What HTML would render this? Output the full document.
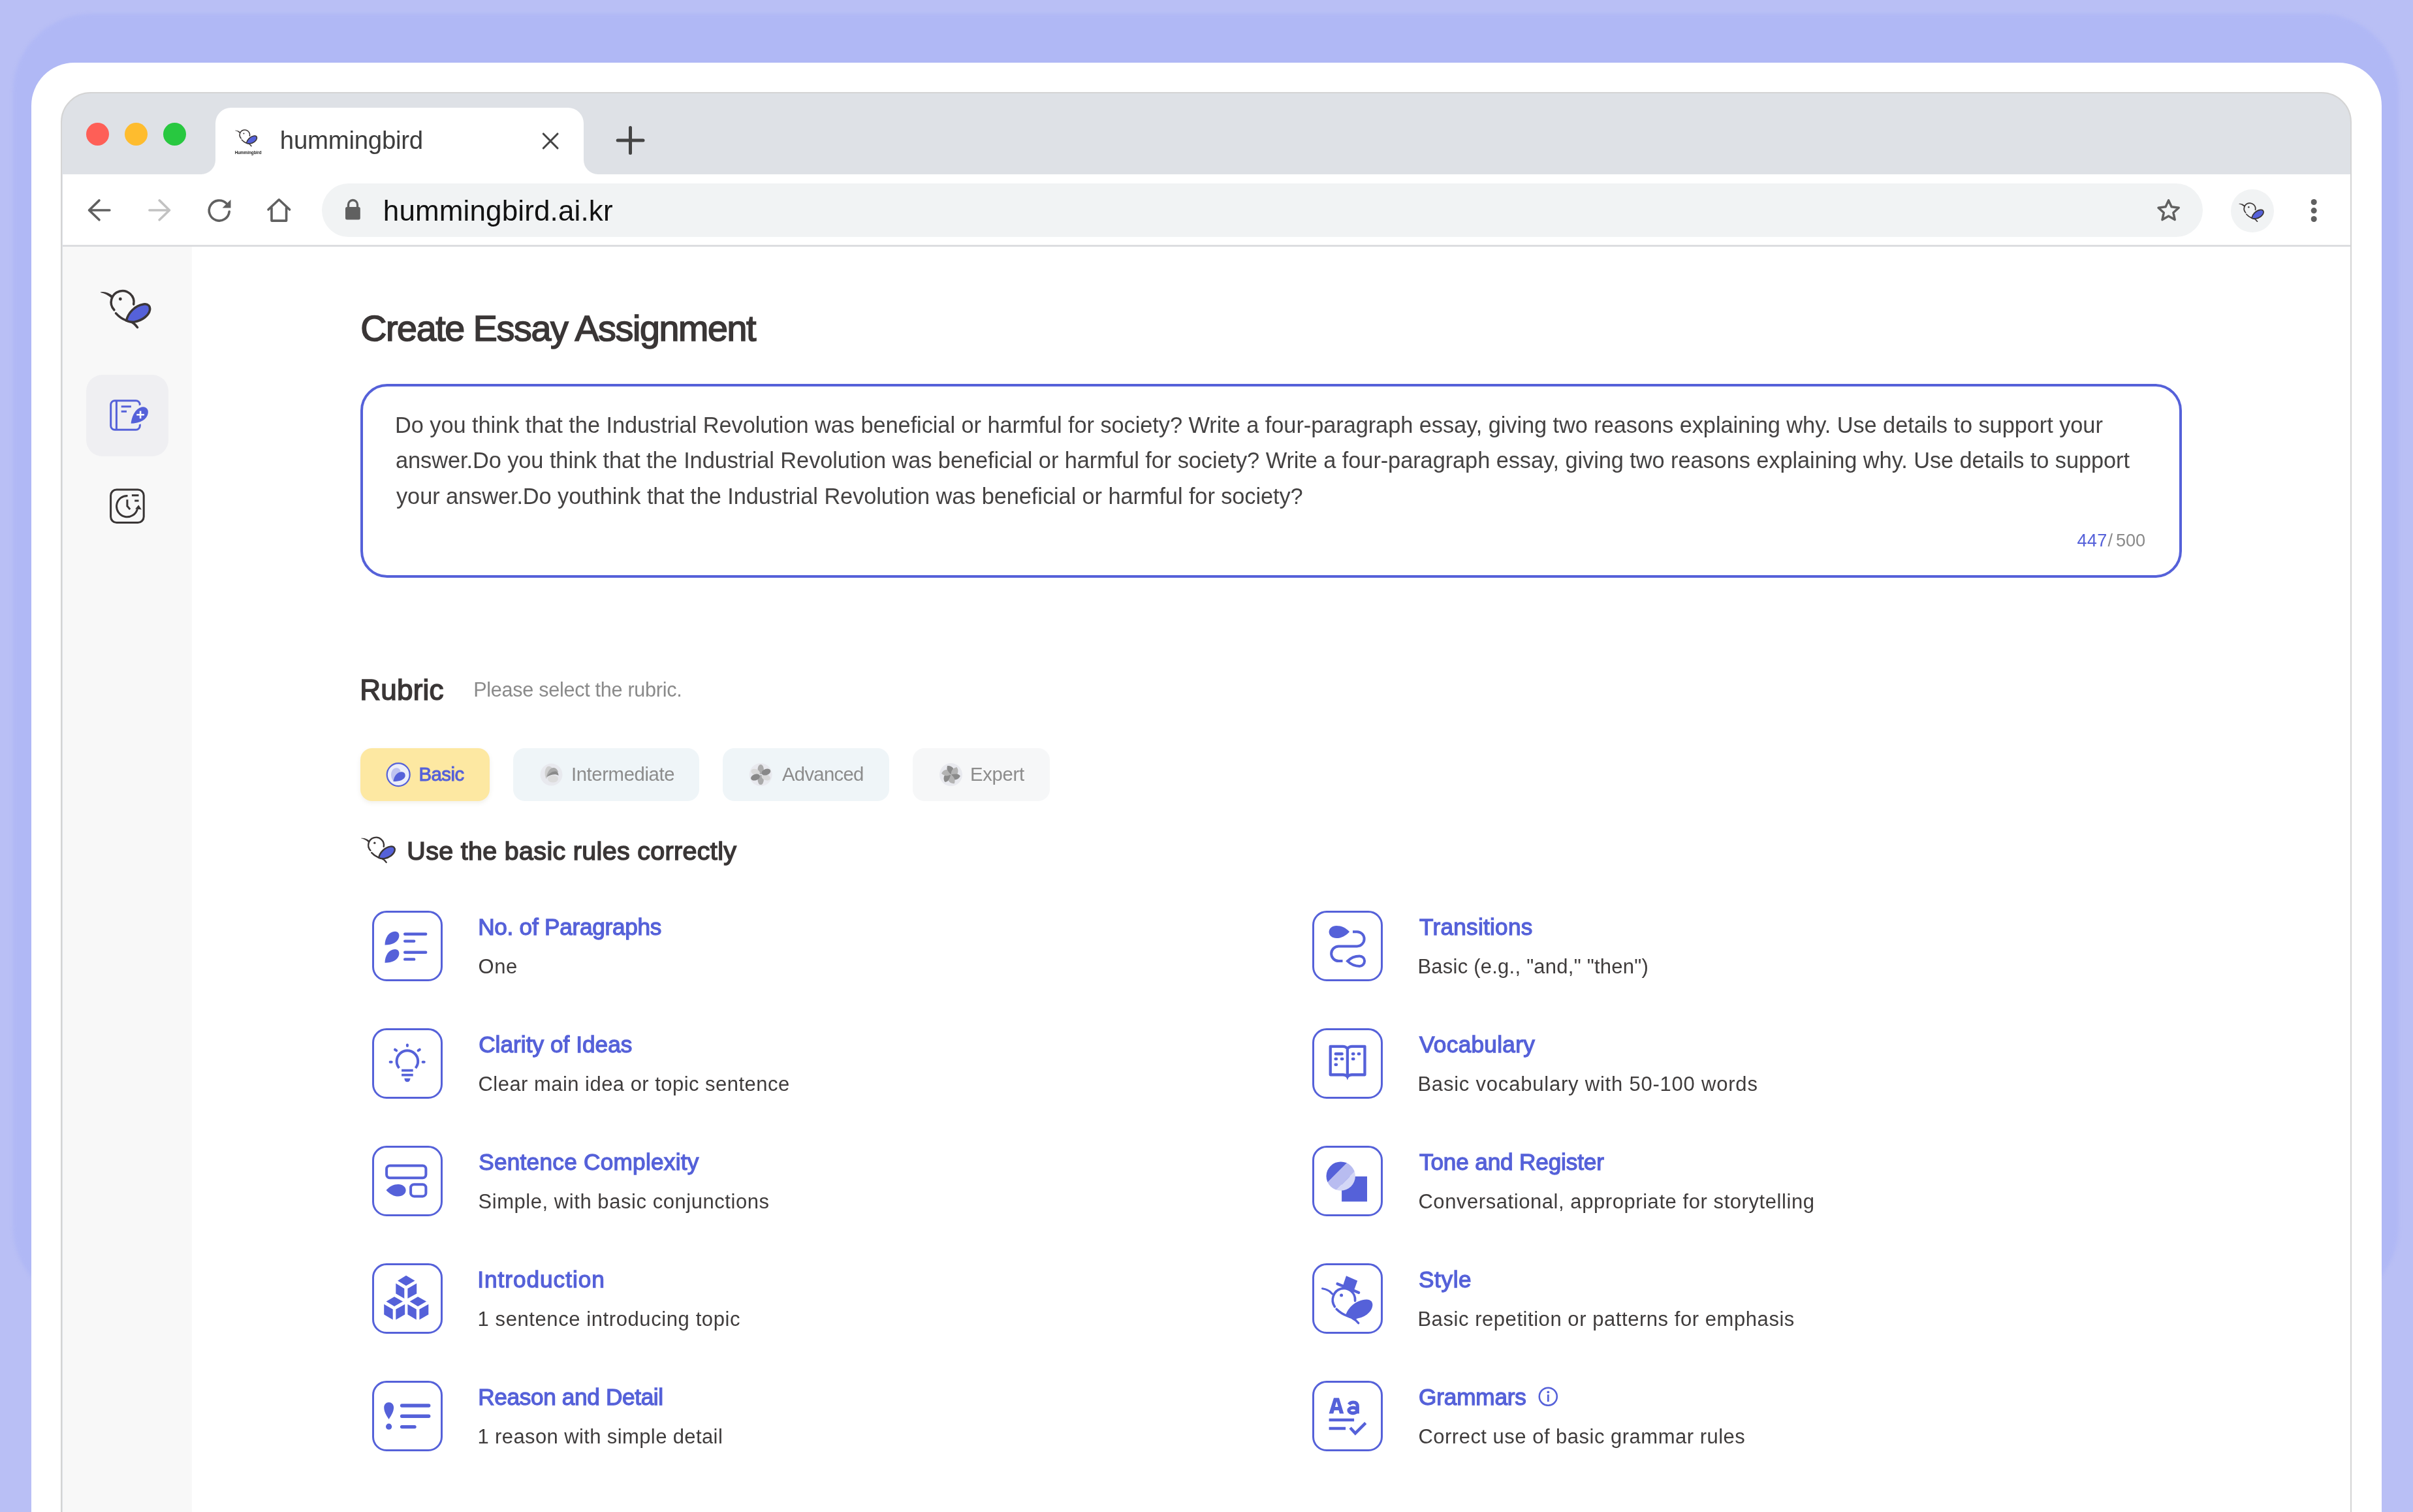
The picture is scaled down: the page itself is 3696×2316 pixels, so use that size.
<!DOCTYPE html>
<html><head><meta charset="utf-8">
<style>
html,body{margin:0;padding:0}
body{width:3696px;height:2316px;overflow:hidden;position:relative;background:#b9bff5;font-family:"Liberation Sans",sans-serif}
.a{position:absolute}
.t{position:absolute;white-space:nowrap;line-height:1}
#txt{position:absolute;left:0;top:0;width:3696px;height:2316px;will-change:transform}
svg{position:absolute;overflow:visible}
</style></head>
<body>
<div class="a" style="left:20px;top:21px;width:3654px;height:1978px;border-radius:120px;background:#b0b8f5;filter:blur(2.5px)"></div>
<div class="a" style="left:48px;top:96px;width:3600px;height:2400px;border-radius:66px;background:#fff"></div>
<div class="a" style="left:93px;top:141px;width:3509px;height:2400px;box-sizing:border-box;border:2.5px solid #d4d4d4;border-radius:46px 46px 0 0;background:#dee1e6"></div>
<div class="a" style="left:95.5px;top:267px;width:3504px;height:2400px;background:#fff"></div>
<div class="a" style="left:306px;top:243px;width:24px;height:24px;background:#fff"></div>
<div class="a" style="left:302px;top:239px;width:28px;height:28px;background:#dee1e6;border-bottom-right-radius:22px"></div>
<div class="a" style="left:894px;top:243px;width:24px;height:24px;background:#fff"></div>
<div class="a" style="left:894px;top:239px;width:28px;height:28px;background:#dee1e6;border-bottom-left-radius:22px"></div>
<div class="a" style="left:330px;top:165px;width:564px;height:102px;border-radius:24px 24px 0 0;background:#fff"></div>
<div class="a" style="left:132px;top:188px;width:35px;height:35px;border-radius:50%;background:#fe5f57"></div>
<div class="a" style="left:191px;top:188px;width:35px;height:35px;border-radius:50%;background:#febc2e"></div>
<div class="a" style="left:250px;top:188px;width:35px;height:35px;border-radius:50%;background:#28c840"></div>
<div class="a" style="left:492.8px;top:281.4px;width:2881.6px;height:81.8px;border-radius:41px;background:#f1f3f4"></div>
<div class="a" style="left:3417.4px;top:290.2px;width:65.6px;height:65.6px;border-radius:50%;background:#f1f3f4"></div>
<div class="a" style="left:95.5px;top:375px;width:3504px;height:3px;background:#dcdde0"></div>
<div class="a" style="left:95.5px;top:378px;width:198.5px;height:2000px;background:#f8f8f8"></div>
<div class="a" style="left:132px;top:573.6px;width:126px;height:125.6px;border-radius:25px;background:#efeff2"></div>
<!-- textarea -->
<div class="a" style="left:552px;top:588px;width:2790px;height:296.5px;box-sizing:border-box;border:4px solid #5561d9;border-radius:41px"></div>
<!-- rubric buttons -->
<div class="a" style="left:552.4px;top:1146.2px;width:197.6px;height:80.6px;border-radius:18px;background:#fde8a2;box-shadow:0 3px 6px rgba(120,110,60,0.10)"></div>
<div class="a" style="left:786px;top:1146.2px;width:284.8px;height:80.6px;border-radius:18px;background:#eff5f8"></div>
<div class="a" style="left:1106.9px;top:1146.2px;width:255.1px;height:80.6px;border-radius:18px;background:#eff5f8"></div>
<div class="a" style="left:1398px;top:1146.2px;width:209.7px;height:80.6px;border-radius:18px;background:#f6f7f8"></div>
<div id="txt"><div class="t" style="left:428.80px;top:196.09px;font-size:38.4px;color:#3d3d3d;letter-spacing:-0.256px">hummingbird</div>
<div class="t" style="left:586.80px;top:301.35px;font-size:44px;color:#121212;letter-spacing:0.136px">hummingbird.ai.kr</div>
<div class="t" style="left:552.20px;top:475.93px;font-size:55.6px;color:#3a3636;letter-spacing:-1.375px;-webkit-text-stroke:1.6px #3a3636">Create Essay Assignment</div>
<div class="t" style="left:605.00px;top:633.88px;font-size:34.4px;color:#444242;letter-spacing:-0.072px">Do you think that the Industrial Revolution was beneficial or harmful for society? Write a four-paragraph essay, giving two reasons explaining why. Use details to support your</div>
<div class="t" style="left:606.00px;top:688.18px;font-size:34.4px;color:#444242;letter-spacing:-0.082px">answer.Do you think that the Industrial Revolution was beneficial or harmful for society? Write a four-paragraph essay, giving two reasons explaining why. Use details to support</div>
<div class="t" style="left:607.00px;top:742.88px;font-size:34.4px;color:#444242;letter-spacing:-0.094px">your answer.Do youthink that the Industrial Revolution was beneficial or harmful for society?</div>
<div class="t" style="left:3181.40px;top:813.88px;font-size:27.2px;color:#5561d9;letter-spacing:0.330px">447</div>
<div class="t" style="left:3228.40px;top:813.88px;font-size:27.2px;color:#8a8a8a;letter-spacing:0.000px">/</div>
<div class="t" style="left:3241.00px;top:813.88px;font-size:27.2px;color:#8a8a8a;letter-spacing:-0.120px">500</div>
<div class="t" style="left:551.35px;top:1035.35px;font-size:44px;color:#3a3636;letter-spacing:0.191px;-webkit-text-stroke:1.5px #3a3636">Rubric</div>
<div class="t" style="left:725.20px;top:1040.70px;font-size:30.6px;color:#8a8a8a;letter-spacing:-0.291px">Please select the rubric.</div>
<div class="t" style="left:641.50px;top:1170.90px;font-size:29.3px;color:#5561d9;letter-spacing:-0.498px;-webkit-text-stroke:1.0px #5561d9">Basic</div>
<div class="t" style="left:874.90px;top:1170.90px;font-size:29.3px;color:#8c8c8c;letter-spacing:-0.378px">Intermediate</div>
<div class="t" style="left:1198.00px;top:1170.90px;font-size:29.3px;color:#8c8c8c;letter-spacing:-0.716px">Advanced</div>
<div class="t" style="left:1486.00px;top:1170.90px;font-size:29.3px;color:#8c8c8c;letter-spacing:-0.306px">Expert</div>
<div class="t" style="left:623.35px;top:1283.85px;font-size:39.4px;color:#3a3636;letter-spacing:0.352px;-webkit-text-stroke:1.5px #3a3636">Use the basic rules correctly</div>
<div class="t" style="left:732.15px;top:1401.60px;font-size:35.2px;color:#5561d9;letter-spacing:-0.267px;-webkit-text-stroke:1.3px #5561d9">No. of Paragraphs</div>
<div class="t" style="left:732.50px;top:1464.56px;font-size:31.0px;color:#3f3c3c;letter-spacing:0.573px">One</div>
<div class="t" style="left:733.15px;top:1581.60px;font-size:35.2px;color:#5561d9;letter-spacing:0.041px;-webkit-text-stroke:1.3px #5561d9">Clarity of Ideas</div>
<div class="t" style="left:732.50px;top:1644.56px;font-size:31.0px;color:#3f3c3c;letter-spacing:0.464px">Clear main idea or topic sentence</div>
<div class="t" style="left:733.15px;top:1761.60px;font-size:35.2px;color:#5561d9;letter-spacing:0.267px;-webkit-text-stroke:1.3px #5561d9">Sentence Complexity</div>
<div class="t" style="left:732.50px;top:1824.56px;font-size:31.0px;color:#3f3c3c;letter-spacing:0.549px">Simple, with basic conjunctions</div>
<div class="t" style="left:731.15px;top:1941.60px;font-size:35.2px;color:#5561d9;letter-spacing:0.990px;-webkit-text-stroke:1.3px #5561d9">Introduction</div>
<div class="t" style="left:731.50px;top:2004.56px;font-size:31.0px;color:#3f3c3c;letter-spacing:0.591px">1 sentence introducing topic</div>
<div class="t" style="left:732.15px;top:2121.60px;font-size:35.2px;color:#5561d9;letter-spacing:-0.343px;-webkit-text-stroke:1.3px #5561d9">Reason and Detail</div>
<div class="t" style="left:731.50px;top:2184.56px;font-size:31.0px;color:#3f3c3c;letter-spacing:0.384px">1 reason with simple detail</div>
<div class="t" style="left:2174.05px;top:1401.60px;font-size:35.2px;color:#5561d9;letter-spacing:0.251px;-webkit-text-stroke:1.3px #5561d9">Transitions</div>
<div class="t" style="left:2171.40px;top:1464.56px;font-size:31.0px;color:#3f3c3c;letter-spacing:0.236px">Basic (e.g., &quot;and,&quot; &quot;then&quot;)</div>
<div class="t" style="left:2174.05px;top:1581.60px;font-size:35.2px;color:#5561d9;letter-spacing:0.299px;-webkit-text-stroke:1.3px #5561d9">Vocabulary</div>
<div class="t" style="left:2171.40px;top:1644.56px;font-size:31.0px;color:#3f3c3c;letter-spacing:0.787px">Basic vocabulary with 50-100 words</div>
<div class="t" style="left:2174.05px;top:1761.60px;font-size:35.2px;color:#5561d9;letter-spacing:-0.173px;-webkit-text-stroke:1.3px #5561d9">Tone and Register</div>
<div class="t" style="left:2172.40px;top:1824.56px;font-size:31.0px;color:#3f3c3c;letter-spacing:0.561px">Conversational, appropriate for storytelling</div>
<div class="t" style="left:2173.05px;top:1941.60px;font-size:35.2px;color:#5561d9;letter-spacing:0.586px;-webkit-text-stroke:1.3px #5561d9">Style</div>
<div class="t" style="left:2171.40px;top:2004.56px;font-size:31.0px;color:#3f3c3c;letter-spacing:0.554px">Basic repetition or patterns for emphasis</div>
<div class="t" style="left:2173.05px;top:2121.60px;font-size:35.2px;color:#5561d9;letter-spacing:-0.181px;-webkit-text-stroke:1.3px #5561d9">Grammars</div>
<div class="t" style="left:2172.40px;top:2184.56px;font-size:31.0px;color:#3f3c3c;letter-spacing:0.494px">Correct use of basic grammar rules</div></div>
<svg class="a" style="left:0;top:0" width="3696" height="2316" viewBox="0 0 3696 2316">
<defs>
<symbol id="bird" viewBox="12 16 82 63" overflow="visible">
 <path fill="#3b3636" d="M14,22.2 Q24.5,20.6 33,28.6 L30.3,31.6 Q23,24.6 14,22.9 Z"/>
 <g fill="none" stroke="#3b3636" stroke-width="3.5" stroke-linecap="round" stroke-linejoin="round">
  <path d="M34.9,49.8 A17.4,17.4 0 1 1 64.7,41.2"/>
  <path d="M37.5,54.8 Q44,62 52.5,65.5 Q58,67.5 64,68.5"/>
  <path d="M58,66.5 Q65,69 70.5,76.5"/>
  <path d="M53.5,66 C56,55 66,43 80,41 C87,40 90.5,44 89.5,50 C88,58 78,66 66,68 C60,68.5 56,67.5 53.5,66 Z" fill="#5561d9"/>
 </g>
 <circle cx="44.3" cy="33" r="2.4" fill="#3b3636"/>
</symbol>
<symbol id="box" viewBox="0 0 108 108" overflow="visible">
 <rect x="1.5" y="1.5" width="105" height="105" rx="20.5" fill="none" stroke="#5561d9" stroke-width="3"/>
</symbol>
<clipPath id="tc"><circle cx="43.7" cy="46.6" r="22.2"/></clipPath>
</defs>
<!-- birds -->
<use href="#bird" x="152" y="441" width="82" height="63"/>
<use href="#bird" x="359.1" y="197" width="36.3" height="27.9"/>
<use href="#bird" x="3428.1" y="308.8" width="41.2" height="31.6"/>
<use href="#bird" x="551.8" y="1279.6" width="55.9" height="43"/>
<text x="380.1" y="235.8" font-family="Liberation Sans" font-weight="700" font-size="6.3" text-anchor="middle" fill="#222">Hummingbird</text>
<!-- toolbar icons -->
<g fill="none" stroke-linecap="round" stroke-linejoin="round" stroke-width="3.6">
 <path stroke="#606060" d="M167.9,322 H136.5 M152,306.9 L136.5,322 L152,336.8"/>
 <path stroke="#c2c2c2" d="M228.9,322 H259.5 M244.2,306.9 L259.5,322 L244.2,336.8"/>
 <path stroke="#606060" d="M351.2,324 A15.5,15.5 0 1 1 346.7,311.5"/>
 <path stroke="#606060" d="M411,321 L427.3,305.8 L443.6,321 M416,318 V338.1 H438.6 V318"/>
 <path stroke="#606060" stroke-width="3.3" d="M533.5,318 V313.5 A7,7 0 0 1 547.5,313.5 V318"/>
 <path stroke="#444" stroke-width="3.1" d="M832.3,205 L854,227 M854,205 L832.3,227"/>
 <path stroke="#444" stroke-width="5" d="M946.2,215 H985 M965.5,195.5 V234.5"/>
</g>
<path fill="#606060" d="M353.5,305.8 V318.6 H340.6 Z"/>
<rect x="529" y="317.1" width="22.8" height="19.4" rx="2.5" fill="#606060"/>
<path fill="none" stroke="#606060" stroke-width="3.5" stroke-linejoin="round" d="M3321.6,306.9 L3326.1,316.8 L3337.2,318.3 L3328.9,325.7 L3331.2,336.6 L3321.6,331.1 L3312.0,336.6 L3314.3,325.7 L3306.0,318.3 L3317.1,316.8 Z"/>
<g fill="#606060"><circle cx="3544.2" cy="309.5" r="4.5"/><circle cx="3544.2" cy="322.6" r="4.5"/><circle cx="3544.2" cy="335.5" r="4.5"/></g>

<!-- sidebar edit icon -->
<g fill="none" stroke="#5561d9" stroke-width="3">
 <rect x="169.7" y="613.7" width="44.6" height="44.6" rx="6"/>
 <path d="M178.4,613.7 V658.3"/>
 <path d="M185.7,622.7 H200.9 M185.7,630.3 H194"/>
</g>
<path fill="#5561d9" stroke="#efeff2" stroke-width="3.5" d="M198.6,650.5 C199.5,640 204,625 216.5,621.8 C224,620 229.5,626 228.5,633 C227,643 217,650.5 198.6,650.5 Z"/>
<path fill="none" stroke="#fff" stroke-width="2.6" d="M209.3,635.3 H220.9 M215.1,629.5 V641.1"/>
<!-- sidebar history icon -->
<g fill="none" stroke="#393535" stroke-width="3">
 <rect x="169.6" y="750" width="50.6" height="50.5" rx="9"/>
 <path d="M195.5,759.4 A16.2,16.2 0 1 0 210.4,779.8"/>
 <path d="M194.9,765.3 V775.3 L199.2,780.2"/>
 <path d="M201.9,758.7 H212.5 M206.2,767 H212.5"/>
</g>
<path fill="#393535" d="M212.3,773.4 L216.8,780.6 L207.2,779.6 Z"/>

<!-- rubric button icons -->
<circle cx="610.2" cy="1186.6" r="17.5" fill="#eceefa" stroke="#5561d9" stroke-width="2.2"/>
<path fill="#bfc3f0" d="M602.3,1196.5 C597.5,1190 598,1181 603.5,1177.3 C607.5,1175 612.5,1176.8 613.5,1181 L607,1191 Z"/>
<path fill="#5561d9" d="M602.5,1197 C603,1190 608,1182.5 614.5,1182.3 C619,1182.2 621.5,1185.5 620.5,1189.5 C619,1194.5 612,1197 602.5,1197 Z"/>

<circle cx="844.5" cy="1186.6" r="17" fill="#e8e9ee"/>
<path fill="#cfcfcf" d="M836.5,1193 C833.5,1187 834,1178.5 838,1174.5 C841,1172.5 845,1174.5 846,1177 L839,1190 Z"/>
<path fill="#a9a9a9" d="M836.8,1190.5 C838.5,1182 843,1176 848,1176 C852,1176 854.5,1180 855,1183 C849,1181 842,1185 836.8,1190.5 Z"/>
<path fill="#8a8a8a" d="M837.5,1190 C841,1184.5 846,1181.5 850.5,1181.5 C853.5,1181.5 855.5,1184 855.5,1188 C851,1184.5 844,1186.5 837.5,1190 Z"/>
<ellipse cx="847" cy="1193" rx="8" ry="5.5" fill="#dcdcdc"/>

<circle cx="1165.2" cy="1186.6" r="17.5" fill="#e8e9ee"/>
<g transform="translate(1165.2,1186.6)">
 <ellipse cx="0" cy="-8" rx="4.6" ry="7.5" fill="#aaaaaa"/>
 <ellipse cx="0" cy="8" rx="4.6" ry="7.5" fill="#aaaaaa"/>
 <ellipse cx="-8" cy="-4" rx="7" ry="4.5" transform="rotate(20 -8 -4)" fill="#d8d8d8"/>
 <ellipse cx="8" cy="4" rx="7" ry="4.5" transform="rotate(20 8 4)" fill="#d8d8d8"/>
 <ellipse cx="8.2" cy="-4" rx="7.2" ry="4.6" transform="rotate(-20 8.2 -4)" fill="#888"/>
 <ellipse cx="-8.2" cy="4" rx="7.2" ry="4.6" transform="rotate(-20 -8.2 4)" fill="#888"/>
</g>

<circle cx="1456.5" cy="1186.6" r="17.5" fill="#e8e9ee"/>
<g transform="translate(1456.5,1186.6)">
 <g id="bl"><path fill="#8a8a8a" d="M0,0 Q-8,-5 -5.5,-13.5 Q1,-14 4,-9 Q1.5,-5 0,0 Z"/></g>
 <use href="#bl" transform="rotate(120)"/><use href="#bl" transform="rotate(240)"/>
 <g transform="rotate(60)"><path fill="#b3b3b3" d="M0,0 Q-8,-5 -5.5,-13.5 Q1,-14 4,-9 Q1.5,-5 0,0 Z"/></g>
 <g transform="rotate(180)"><path fill="#b3b3b3" d="M0,0 Q-8,-5 -5.5,-13.5 Q1,-14 4,-9 Q1.5,-5 0,0 Z"/></g>
 <g transform="rotate(300)"><path fill="#b3b3b3" d="M0,0 Q-8,-5 -5.5,-13.5 Q1,-14 4,-9 Q1.5,-5 0,0 Z"/></g>
</g>

<!-- item icon boxes -->
<g id="boxes">
<use href="#box" x="570" y="1395" width="108" height="108"/>
<use href="#box" x="570" y="1575" width="108" height="108"/>
<use href="#box" x="570" y="1755" width="108" height="108"/>
<use href="#box" x="570" y="1935" width="108" height="108"/>
<use href="#box" x="570" y="2115" width="108" height="108"/>
<use href="#box" x="2010" y="1395" width="108" height="108"/>
<use href="#box" x="2010" y="1575" width="108" height="108"/>
<use href="#box" x="2010" y="1755" width="108" height="108"/>
<use href="#box" x="2010" y="1935" width="108" height="108"/>
<use href="#box" x="2010" y="2115" width="108" height="108"/>
</g>

<!-- icon 1: paragraphs -->
<g transform="translate(570,1395)">
 <path fill="#5561d9" d="M19.5,52.5 C19.5,41 26,32 35,31.8 C40,31.8 42.5,36 41,41 C39,48 31,52.5 19.5,52.5 Z"/>
 <path fill="#5561d9" d="M19.5,79.8 C19.5,68.3 26,59.3 35,59.1 C40,59.1 42.5,63.3 41,68.3 C39,75.3 31,79.8 19.5,79.8 Z"/>
 <path fill="none" stroke="#5561d9" stroke-width="4.4" stroke-linecap="round" d="M50.2,35.7 H82.2 M50.2,46.6 H64.2 M50.2,63.7 H82.2 M50.2,74.4 H64.2"/>
</g>
<!-- icon 2: bulb -->
<g transform="translate(570,1575)" fill="none" stroke="#5561d9" stroke-width="4">
 <path d="M41.4,61 A16.3,16.3 0 1 1 66.4,61"/>
 <path stroke-linecap="round" d="M53.9,25.4 V27 M35,32.7 L37.2,34.1 M70.6,34.1 L72.8,32.7 M27.6,51.7 H29.7 M77.6,51.7 H79.7"/>
 <path stroke-width="3.8" d="M45.1,64.6 H62.7 M45.1,71.6 H62.7"/>
 <path fill="#5561d9" stroke="none" d="M49.3,76.7 H58.5 Q58,82.2 53.9,82.2 Q49.8,82.2 49.3,76.7 Z"/>
</g>
<!-- icon 3: sentence -->
<g transform="translate(570,1755)">
 <g fill="none" stroke="#5561d9" stroke-width="4">
  <rect x="22.1" y="30.5" width="60.3" height="18.7" rx="5"/>
  <rect x="59.1" y="59.2" width="23.3" height="18.2" rx="5"/>
 </g>
 <path fill="#5561d9" d="M21.5,68 C27,62 33,59 40,59 C46.5,59 51.6,63 51.6,68.3 C51.6,73.5 46.5,77.6 40,77.6 C33,77.6 27,74 21.5,68 Z"/>
</g>
<!-- icon 4: cubes -->
<g transform="translate(570,1935)" fill="#5561d9">
 <path d="M39.1,26.7 L52,18.8 L65.5,26.7 L52,34.5 Z M36.3,30.8 L49.3,38.7 L49.3,54 L36.3,46.6 Z M54.4,38.7 L68.2,30.8 L68.2,46.6 L54.4,54 Z"/>
 <path d="M21.5,58.6 L34,51.2 L47,58.6 L34,66 Z M18.2,62.8 L31.7,70.6 L31.7,86.4 L18.2,78.5 Z M36.3,70.6 L50.2,62.8 L50.2,78.5 L36.3,86.4 Z"/>
 <path d="M57.6,58.6 L70.1,51.2 L83.1,58.6 L70.1,66 Z M54.4,62.8 L67.8,70.6 L67.8,86.4 L54.4,78.5 Z M72.4,70.6 L86.3,62.8 L86.3,78.5 L72.4,86.4 Z"/>
</g>
<!-- icon 5: reason -->
<g transform="translate(570,2115)">
 <path fill="#5561d9" d="M25.6,59.1 C22,53 18.2,48 18.2,40.8 C18.2,36.5 21.5,33.1 25.6,33.1 C29.7,33.1 33.1,36.5 33.1,40.8 C33.1,48 29.2,53 25.6,59.1 Z"/>
 <circle cx="25.6" cy="70.2" r="4.6" fill="#5561d9"/>
 <path fill="none" stroke="#5561d9" stroke-width="5.4" stroke-linecap="round" d="M45.6,38 H86.7 M45.6,54.3 H86.7 M45.6,70.6 H65"/>
</g>
<!-- icon 6: transitions -->
<g transform="translate(2010,1395)">
 <path fill="#5561d9" d="M57.1,32.2 C51,26 45,23 37,23 C30.5,23 25.6,27 25.6,32.5 C25.6,38 30.5,42 37,42 C45,42 51,38.5 57.1,32.2 Z"/>
 <g fill="none" stroke="#5561d9" stroke-width="4">
  <path d="M62,32.2 H68.5 A11.1,11.1 0 0 1 68.5,54.4 H40.5 A11.35,11.35 0 0 0 40.5,77.1 H46.5"/>
  <path d="M54,77.1 C59,72 64.5,69.4 72.4,69.4 C76.7,69.4 80.1,72.8 80.1,77.1 C80.1,81.4 76.7,84.9 72.4,84.9 C64.5,84.9 59,82 54,77.1 Z"/>
 </g>
</g>
<!-- icon 7: book -->
<g transform="translate(2010,1575)">
 <g fill="none" stroke="#5561d9" stroke-width="4.3" stroke-linejoin="round">
  <path d="M53.9,31 Q51,27.85 47,27.85 H27.75 V71.25 H47 Q51,71.25 53.9,74 Q56.8,71.25 60.8,71.25 H80.45 V27.85 H60.8 Q56.8,27.85 53.9,31 Z M53.9,31 V74"/>
 </g>
 <path fill="#5561d9" d="M50.8,72 L57,72 L53.9,79.4 Z"/>
 <path fill="none" stroke="#5561d9" stroke-width="4.4" stroke-linecap="round" d="M35.8,39.2 H45.6 M35.6,47 H37 M44.9,47 H46.3 M35.6,55.8 H37 M62,39.2 H63.4 M70.8,39.2 H72.2 M62,47 H63.4"/>
</g>
<!-- icon 8: tone -->
<g transform="translate(2010,1755)">
 <rect x="45.1" y="47" width="38.9" height="38.5" fill="#5561d9"/>
 <g clip-path="url(#tc)">
  <path fill="#5561d9" d="M0,0 L79.4,0 L0,79.4 Z"/>
  <path fill="#b8bcf0" d="M79.4,0 L104.6,0 L0,104.6 L0,79.4 Z"/>
  <path fill="#d4d7f6" d="M104.6,0 L130,0 L130,130 L0,130 L0,104.6 Z"/>
 </g>
</g>
<!-- icon 9: style -->
<g transform="translate(2010,1935)">
 <g fill="none" stroke="#5561d9" stroke-width="3.6" stroke-linecap="round">
  <path stroke-width="3" d="M15.5,38.7 Q25,40 30.7,47"/>
  <path d="M34.4,66.5 A17.2,17.8 0 1 1 65.6,57.5"/>
  <path d="M37.2,70.2 Q44,77 53,80.4 Q62,84 66,85"/>
  <path d="M62,84.5 Q67,87 70.6,91.5"/>
  <path stroke-width="4.2" d="M38.5,31.5 L71.2,45"/>
 </g>
 <path fill="#5561d9" d="M51.1,79.4 C55,67 67,56.5 82.6,55.4 C89.5,55 93,59.5 92.3,65 C91,75 80,83.5 66,85 C60,85.5 55,83 51.1,79.4 Z"/>
 <path fill="#5561d9" d="M52,19.3 L69.2,26.7 L64.3,40.5 L47.2,33.4 Z"/>
 <circle cx="44.6" cy="48.9" r="2.5" fill="#5561d9"/>
</g>
<!-- icon 10: grammar -->
<g transform="translate(2010,2115)">
 <path fill="#5561d9" fill-rule="evenodd" d="M25.6,50.3 L33,26.2 H41 L48.3,50.3 H41.9 L40.6,45.2 H33.7 L32.3,50.3 Z M34.9,40 L37.3,31.8 L39.6,40 Z"/>
 <path fill="none" stroke="#5561d9" stroke-width="5.2" d="M56.2,36.3 Q58.5,33 62.8,33 Q69.3,33 69.3,39.5 V50.3"/>
 <ellipse cx="62.3" cy="45.4" rx="6.3" ry="4.3" fill="none" stroke="#5561d9" stroke-width="5.2"/>
 <path fill="none" stroke="#5561d9" stroke-width="4.5" d="M25.6,60 H64.1 M25.6,73 H51.1"/>
 <path fill="none" stroke="#5561d9" stroke-width="4.5" stroke-linejoin="miter" d="M58.1,72 L65.9,80.4 L81.7,64.6"/>
</g>
<!-- info icon -->
<circle cx="2371.3" cy="2139.2" r="13.5" fill="none" stroke="#5561d9" stroke-width="2.6"/>
<circle cx="2371.3" cy="2132.3" r="1.9" fill="#5561d9"/>
<path stroke="#5561d9" stroke-width="2.8" d="M2371.3,2136 V2147"/>
</svg>

</body></html>
